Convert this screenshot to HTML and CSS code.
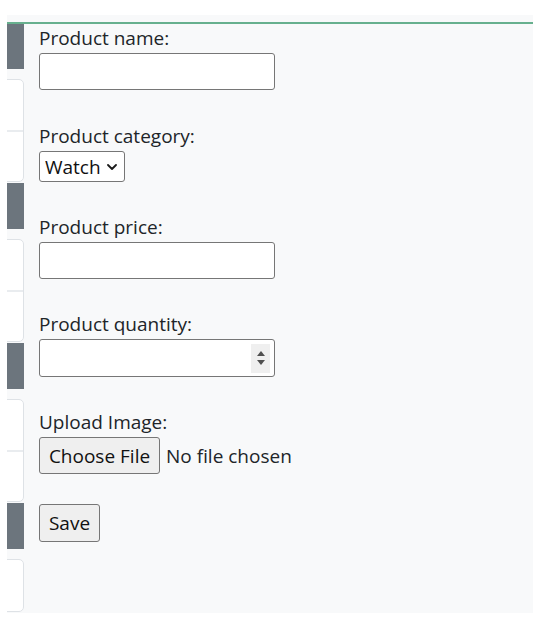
FILE: index.html
```html
<!DOCTYPE html>
<html lang="en">
<head>
<meta charset="utf-8">
<title>Add product</title>
<link rel="stylesheet" href="styles.css">
</head>
<body>
<div class="panel">
  <div class="row">
    <aside class="side">
      <div class="thumb first"></div>
      <div class="card"><div class="card-top"></div></div>
      <div class="thumb"></div>
      <div class="card"><div class="card-top"></div></div>
      <div class="thumb"></div>
      <div class="card"><div class="card-top"></div></div>
      <div class="thumb"></div>
      <div class="card short"></div>
    </aside>
    <main class="form">
      <div class="field field-name">
        <label class="lbl" for="pname">Product name:</label>
        <input id="pname" class="text" type="text">
      </div>
      <div class="field field-select">
        <label class="lbl" for="pcat">Product category:</label>
        <div class="selwrap">
          <select id="pcat" class="sel">
            <option>Watch</option>
          </select>
          <svg class="chev" width="10" height="6" viewBox="0 0 10 6" aria-hidden="true"><path d="M1 1 L5 5 L9 1" fill="none" stroke="#1a1a1a" stroke-width="1.8" stroke-linecap="round" stroke-linejoin="round"/></svg>
        </div>
      </div>
      <div class="field">
        <label class="lbl" for="pprice">Product price:</label>
        <input id="pprice" class="text" type="text">
      </div>
      <div class="field">
        <label class="lbl" for="pqty">Product quantity:</label>
        <div class="numbox">
          <input id="pqty" class="numinput" type="text">
          <span class="spin"><span class="arr up"></span><span class="arr down"></span></span>
        </div>
      </div>
      <div class="field field-file">
        <span class="lbl">Upload Image:</span>
        <div class="filerow">
          <button class="btn btn-file" type="button">Choose File</button>
          <span class="nofile">No file chosen</span>
        </div>
      </div>
      <button class="btn btn-save" type="button">Save</button>
    </main>
  </div>
</div>
</body>
</html>
```
FILE: styles.css
```css
html, body {
  margin: 0;
  padding: 0;
  background: #ffffff;
}
body {
  font-family: "Open Sans", "Noto Sans", "Liberation Sans", sans-serif;
  font-size: 19px;
  color: #212529;
}
.panel {
  margin: 15px 0 0 7px;
  width: 526px;
  background: #f8f9fa;
  padding: 7px 0 1px;
}
.row {
  display: flex;
  border-top: 2px solid #67b08e;
}
.side {
  width: 17px;
  flex: none;
  overflow: hidden;
  display: flex;
  flex-direction: column;
  align-items: flex-end;
}
.thumb {
  flex: none;
  width: 120px;
  height: 46px;
  background: #6c757d;
}
.thumb.first {
  height: 45px;
}
.card {
  flex: none;
  width: 120px;
  height: 103px;
  box-sizing: border-box;
  margin: 10px 0 1px;
  background: #ffffff;
  border: 1px solid #dee2e6;
  border-radius: 5px;
}
.card-top {
  height: 50px;
  border-bottom: 2px solid #e9ecef;
}
.card.short {
  height: 53px;
  margin-bottom: 0;
}
.form {
  flex: 1;
  padding: 2px 0 0 15px;
}
.field {
  margin-bottom: 33px;
}
.field-name {
  margin-bottom: 34px;
}
.field-select {
  margin-bottom: 33px;
}
.field-file {
  margin-bottom: 30px;
}
.lbl {
  display: block;
  line-height: 24px;
  padding-bottom: 3px;
}
.text {
  display: block;
  box-sizing: border-box;
  width: 236px;
  height: 37px;
  margin: 0;
  padding: 1px 4px;
  border: 1px solid #767676;
  border-radius: 3px;
  background: #ffffff;
  font: inherit;
  color: #212529;
}
.selwrap {
  position: relative;
  width: 86px;
  height: 31px;
}
.sel {
  display: block;
  box-sizing: border-box;
  width: 86px;
  height: 31px;
  margin: 0;
  padding: 0 0 0 5px;
  border: 1px solid #767676;
  border-radius: 3px;
  background: #ffffff;
  font-family: inherit;
  font-size: 19px;
  color: #111111;
  appearance: none;
  -webkit-appearance: none;
}
.chev {
  position: absolute;
  right: 8px;
  top: 13px;
  pointer-events: none;
}
.numbox {
  display: flex;
  align-items: center;
  box-sizing: border-box;
  width: 236px;
  height: 38px;
  padding: 4px 4px 4px 0;
  border: 1px solid #767676;
  border-radius: 3px;
  background: #ffffff;
}
.numinput {
  flex: 1;
  min-width: 0;
  height: 100%;
  border: none;
  outline: none;
  background: transparent;
  font: inherit;
  padding: 0 4px;
}
.spin {
  flex: none;
  width: 19px;
  height: 29px;
  background: #efefef;
  display: flex;
  flex-direction: column;
  align-items: center;
  justify-content: center;
  gap: 4px;
}
.arr {
  width: 0;
  height: 0;
  border-left: 4.5px solid transparent;
  border-right: 4.5px solid transparent;
}
.up {
  border-bottom: 5px solid #4f4f4f;
}
.down {
  border-top: 5px solid #4f4f4f;
}
.filerow {
  display: flex;
  align-items: center;
  gap: 6px;
}
.btn {
  box-sizing: border-box;
  margin: 0;
  padding: 0;
  border: 1px solid #767676;
  border-radius: 3px;
  background: #efefef;
  font: inherit;
  color: #111111;
  text-align: center;
}
.btn-file {
  width: 121px;
  height: 37px;
}
.nofile {
  color: #212529;
}
.btn-save {
  display: block;
  width: 61px;
  height: 38px;
}
```
